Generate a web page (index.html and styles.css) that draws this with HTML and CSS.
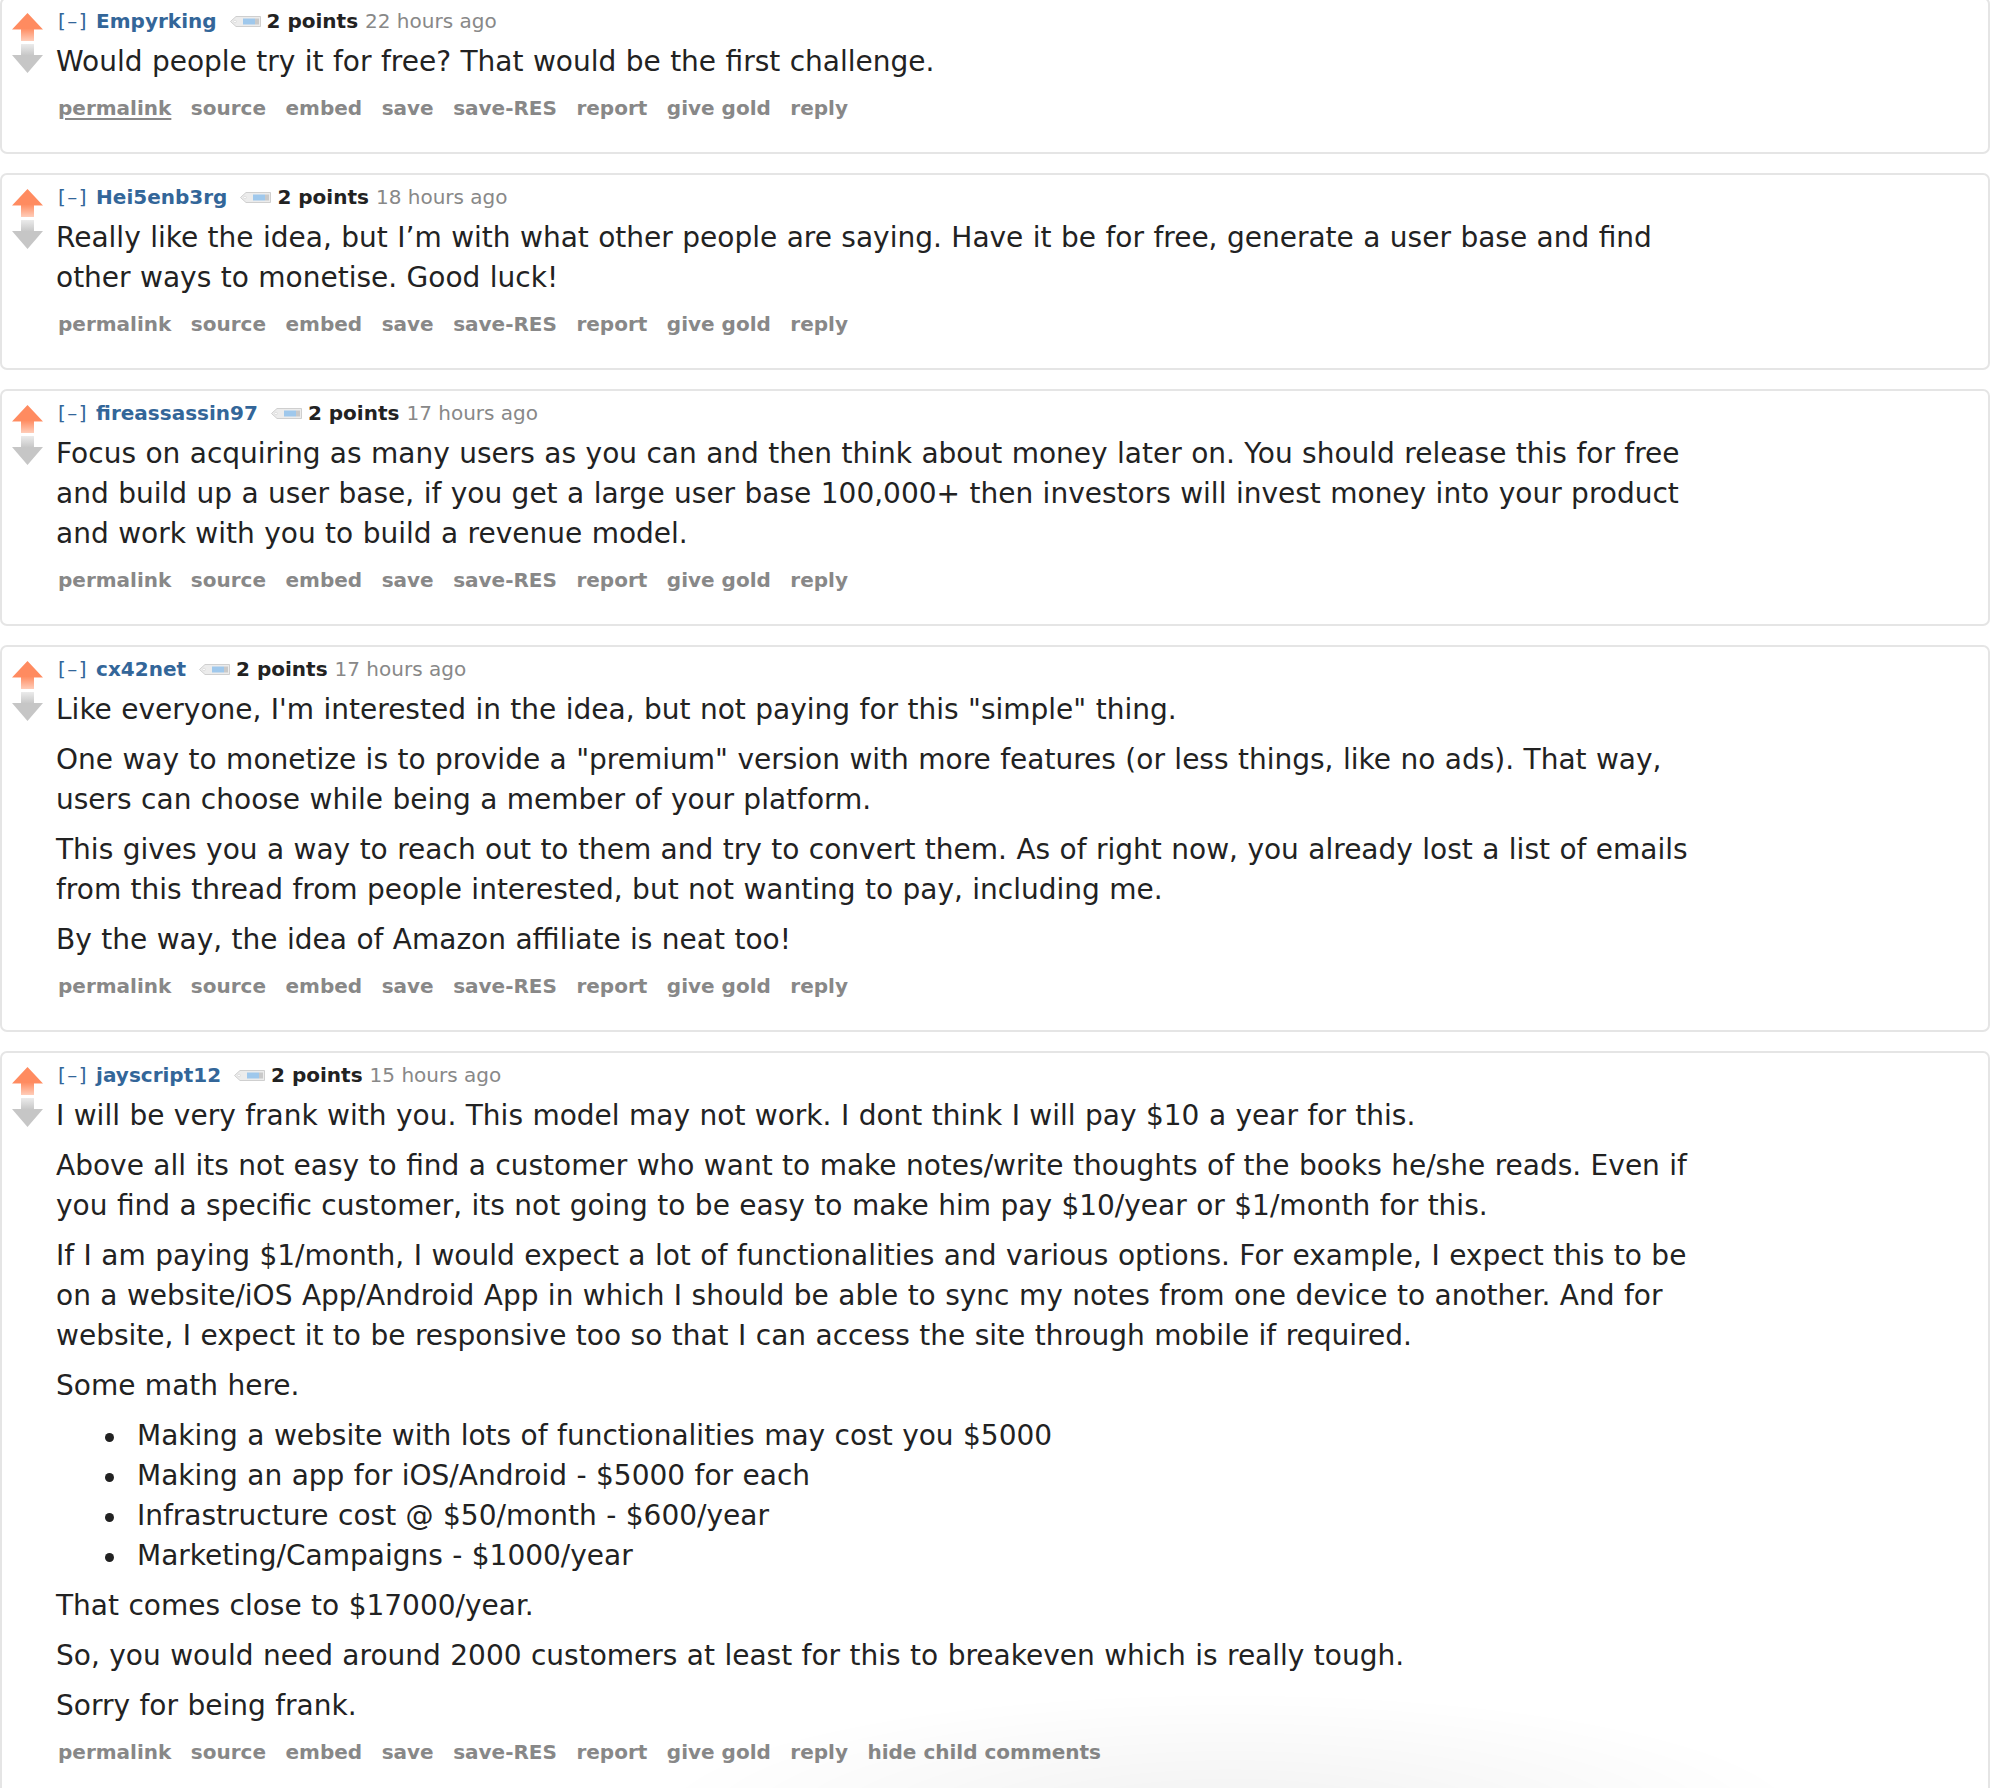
FILE: index.html
```html
<!DOCTYPE html>
<html lang="en">
<head>
<meta charset="utf-8">
<title>Comments</title>
<link rel="stylesheet" href="styles.css">
</head>
<body>
<div class="comments">

  <div class="comment">
    <div class="midcol">
      <svg class="arrow" width="31" height="28" viewBox="0 0 31 28"><defs><linearGradient id="ug1" x1="0" y1="0" x2="0" y2="1"><stop offset="0" stop-color="#ff8b60"/><stop offset="0.55" stop-color="#ff8b60"/><stop offset="1" stop-color="#ffcdb9"/></linearGradient></defs><polygon points="15.5,0 31,16.5 22,16.5 22,28 9,28 9,16.5 0,16.5" fill="url(#ug1)"/></svg>
      <svg class="arrow" width="31" height="29" viewBox="0 0 31 29"><defs><linearGradient id="dg1" x1="0" y1="0" x2="0" y2="1"><stop offset="0" stop-color="#ebebeb"/><stop offset="0.4" stop-color="#c6c6c6"/><stop offset="1" stop-color="#c6c6c6"/></linearGradient></defs><polygon points="9,0 22,0 22,11 31,11 15.5,29 0,11 9,11" fill="url(#dg1)"/></svg>
    </div>
    <div class="entry">
      <div class="tagline">
        <span class="expand">[–]</span>
        <span class="author">Empyrking</span>
        <svg class="tag" width="31" height="11" viewBox="0 0 31 11"><polygon points="0.5,5.5 6,0.5 30.5,0.5 30.5,10.5 6,10.5" fill="#ececec" stroke="#cfcfcf"/><circle cx="5" cy="5.5" r="1.3" fill="#fff" stroke="#cfcfcf" stroke-width="0.6"/><rect x="13" y="2.5" width="12" height="6" fill="#9fc8ec"/><rect x="25" y="2.5" width="4" height="6" fill="#c9c9c9"/></svg>
        <span class="score">2 points</span>
        <span class="time">22 hours ago</span>
      </div>
      <div class="md">
        <p>Would people try it for free? That would be the first challenge.</p>
      </div>
      <ul class="buttons">
        <li class="hover">permalink</li><li>source</li><li>embed</li><li>save</li><li>save-RES</li><li>report</li><li>give gold</li><li>reply</li>
      </ul>
    </div>
  </div>

  <div class="comment">
    <div class="midcol">
      <svg class="arrow" width="31" height="28" viewBox="0 0 31 28"><defs><linearGradient id="ug2" x1="0" y1="0" x2="0" y2="1"><stop offset="0" stop-color="#ff8b60"/><stop offset="0.55" stop-color="#ff8b60"/><stop offset="1" stop-color="#ffcdb9"/></linearGradient></defs><polygon points="15.5,0 31,16.5 22,16.5 22,28 9,28 9,16.5 0,16.5" fill="url(#ug2)"/></svg>
      <svg class="arrow" width="31" height="29" viewBox="0 0 31 29"><defs><linearGradient id="dg2" x1="0" y1="0" x2="0" y2="1"><stop offset="0" stop-color="#ebebeb"/><stop offset="0.4" stop-color="#c6c6c6"/><stop offset="1" stop-color="#c6c6c6"/></linearGradient></defs><polygon points="9,0 22,0 22,11 31,11 15.5,29 0,11 9,11" fill="url(#dg2)"/></svg>
    </div>
    <div class="entry">
      <div class="tagline">
        <span class="expand">[–]</span>
        <span class="author">Hei5enb3rg</span>
        <svg class="tag" width="31" height="11" viewBox="0 0 31 11"><polygon points="0.5,5.5 6,0.5 30.5,0.5 30.5,10.5 6,10.5" fill="#ececec" stroke="#cfcfcf"/><circle cx="5" cy="5.5" r="1.3" fill="#fff" stroke="#cfcfcf" stroke-width="0.6"/><rect x="13" y="2.5" width="12" height="6" fill="#9fc8ec"/><rect x="25" y="2.5" width="4" height="6" fill="#c9c9c9"/></svg>
        <span class="score">2 points</span>
        <span class="time">18 hours ago</span>
      </div>
      <div class="md">
        <p>Really like the idea, but I’m with what other people are saying. Have it be for free, generate a user base and find other ways to monetise. Good luck!</p>
      </div>
      <ul class="buttons">
        <li>permalink</li><li>source</li><li>embed</li><li>save</li><li>save-RES</li><li>report</li><li>give gold</li><li>reply</li>
      </ul>
    </div>
  </div>

  <div class="comment">
    <div class="midcol">
      <svg class="arrow" width="31" height="28" viewBox="0 0 31 28"><defs><linearGradient id="ug3" x1="0" y1="0" x2="0" y2="1"><stop offset="0" stop-color="#ff8b60"/><stop offset="0.55" stop-color="#ff8b60"/><stop offset="1" stop-color="#ffcdb9"/></linearGradient></defs><polygon points="15.5,0 31,16.5 22,16.5 22,28 9,28 9,16.5 0,16.5" fill="url(#ug3)"/></svg>
      <svg class="arrow" width="31" height="29" viewBox="0 0 31 29"><defs><linearGradient id="dg3" x1="0" y1="0" x2="0" y2="1"><stop offset="0" stop-color="#ebebeb"/><stop offset="0.4" stop-color="#c6c6c6"/><stop offset="1" stop-color="#c6c6c6"/></linearGradient></defs><polygon points="9,0 22,0 22,11 31,11 15.5,29 0,11 9,11" fill="url(#dg3)"/></svg>
    </div>
    <div class="entry">
      <div class="tagline">
        <span class="expand">[–]</span>
        <span class="author">fireassassin97</span>
        <svg class="tag" width="31" height="11" viewBox="0 0 31 11"><polygon points="0.5,5.5 6,0.5 30.5,0.5 30.5,10.5 6,10.5" fill="#ececec" stroke="#cfcfcf"/><circle cx="5" cy="5.5" r="1.3" fill="#fff" stroke="#cfcfcf" stroke-width="0.6"/><rect x="13" y="2.5" width="12" height="6" fill="#9fc8ec"/><rect x="25" y="2.5" width="4" height="6" fill="#c9c9c9"/></svg>
        <span class="score">2 points</span>
        <span class="time">17 hours ago</span>
      </div>
      <div class="md">
        <p>Focus on acquiring as many users as you can and then think about money later on. You should release this for free and build up a user base, if you get a large user base 100,000+ then investors will invest money into your product and work with you to build a revenue model.</p>
      </div>
      <ul class="buttons">
        <li>permalink</li><li>source</li><li>embed</li><li>save</li><li>save-RES</li><li>report</li><li>give gold</li><li>reply</li>
      </ul>
    </div>
  </div>

  <div class="comment">
    <div class="midcol">
      <svg class="arrow" width="31" height="28" viewBox="0 0 31 28"><defs><linearGradient id="ug4" x1="0" y1="0" x2="0" y2="1"><stop offset="0" stop-color="#ff8b60"/><stop offset="0.55" stop-color="#ff8b60"/><stop offset="1" stop-color="#ffcdb9"/></linearGradient></defs><polygon points="15.5,0 31,16.5 22,16.5 22,28 9,28 9,16.5 0,16.5" fill="url(#ug4)"/></svg>
      <svg class="arrow" width="31" height="29" viewBox="0 0 31 29"><defs><linearGradient id="dg4" x1="0" y1="0" x2="0" y2="1"><stop offset="0" stop-color="#ebebeb"/><stop offset="0.4" stop-color="#c6c6c6"/><stop offset="1" stop-color="#c6c6c6"/></linearGradient></defs><polygon points="9,0 22,0 22,11 31,11 15.5,29 0,11 9,11" fill="url(#dg4)"/></svg>
    </div>
    <div class="entry">
      <div class="tagline">
        <span class="expand">[–]</span>
        <span class="author">cx42net</span>
        <svg class="tag" width="31" height="11" viewBox="0 0 31 11"><polygon points="0.5,5.5 6,0.5 30.5,0.5 30.5,10.5 6,10.5" fill="#ececec" stroke="#cfcfcf"/><circle cx="5" cy="5.5" r="1.3" fill="#fff" stroke="#cfcfcf" stroke-width="0.6"/><rect x="13" y="2.5" width="12" height="6" fill="#9fc8ec"/><rect x="25" y="2.5" width="4" height="6" fill="#c9c9c9"/></svg>
        <span class="score">2 points</span>
        <span class="time">17 hours ago</span>
      </div>
      <div class="md">
        <p>Like everyone, I'm interested in the idea, but not paying for this "simple" thing.</p>
        <p>One way to monetize is to provide a "premium" version with more features (or less things, like no ads). That way, users can choose while being a member of your platform.</p>
        <p>This gives you a way to reach out to them and try to convert them. As of right now, you already lost a list of emails from this thread from people interested, but not wanting to pay, including me.</p>
        <p>By the way, the idea of Amazon affiliate is neat too!</p>
      </div>
      <ul class="buttons">
        <li>permalink</li><li>source</li><li>embed</li><li>save</li><li>save-RES</li><li>report</li><li>give gold</li><li>reply</li>
      </ul>
    </div>
  </div>

  <div class="comment">
    <div class="midcol">
      <svg class="arrow" width="31" height="28" viewBox="0 0 31 28"><defs><linearGradient id="ug5" x1="0" y1="0" x2="0" y2="1"><stop offset="0" stop-color="#ff8b60"/><stop offset="0.55" stop-color="#ff8b60"/><stop offset="1" stop-color="#ffcdb9"/></linearGradient></defs><polygon points="15.5,0 31,16.5 22,16.5 22,28 9,28 9,16.5 0,16.5" fill="url(#ug5)"/></svg>
      <svg class="arrow" width="31" height="29" viewBox="0 0 31 29"><defs><linearGradient id="dg5" x1="0" y1="0" x2="0" y2="1"><stop offset="0" stop-color="#ebebeb"/><stop offset="0.4" stop-color="#c6c6c6"/><stop offset="1" stop-color="#c6c6c6"/></linearGradient></defs><polygon points="9,0 22,0 22,11 31,11 15.5,29 0,11 9,11" fill="url(#dg5)"/></svg>
    </div>
    <div class="entry">
      <div class="tagline">
        <span class="expand">[–]</span>
        <span class="author">jayscript12</span>
        <svg class="tag" width="31" height="11" viewBox="0 0 31 11"><polygon points="0.5,5.5 6,0.5 30.5,0.5 30.5,10.5 6,10.5" fill="#ececec" stroke="#cfcfcf"/><circle cx="5" cy="5.5" r="1.3" fill="#fff" stroke="#cfcfcf" stroke-width="0.6"/><rect x="13" y="2.5" width="12" height="6" fill="#9fc8ec"/><rect x="25" y="2.5" width="4" height="6" fill="#c9c9c9"/></svg>
        <span class="score">2 points</span>
        <span class="time">15 hours ago</span>
      </div>
      <div class="md">
        <p>I will be very frank with you. This model may not work. I dont think I will pay $10 a year for this.</p>
        <p>Above all its not easy to find a customer who want to make notes/write thoughts of the books he/she reads. Even if you find a specific customer, its not going to be easy to make him pay $10/year or $1/month for this.</p>
        <p>If I am paying $1/month, I would expect a lot of functionalities and various options. For example, I expect this to be on a website/iOS App/Android App in which I should be able to sync my notes from one device to another. And for website, I expect it to be responsive too so that I can access the site through mobile if required.</p>
        <p>Some math here.</p>
        <ul>
          <li>Making a website with lots of functionalities may cost you $5000</li>
          <li>Making an app for iOS/Android - $5000 for each</li>
          <li>Infrastructure cost @ $50/month - $600/year</li>
          <li>Marketing/Campaigns - $1000/year</li>
        </ul>
        <p>That comes close to $17000/year.</p>
        <p>So, you would need around 2000 customers at least for this to breakeven which is really tough.</p>
        <p>Sorry for being frank.</p>
      </div>
      <ul class="buttons">
        <li>permalink</li><li>source</li><li>embed</li><li>save</li><li>save-RES</li><li>report</li><li>give gold</li><li>reply</li><li>hide child comments</li>
      </ul>
    </div>
  </div>

</div>
</body>
</html>
```

FILE: styles.css
```css
* { box-sizing: border-box; }

html, body {
  margin: 0;
  padding: 0;
  background: #fff;
}

body {
  font-family: "DejaVu Sans", Verdana, sans-serif;
  color: #222;
  height: 1788px;
  overflow: hidden;
}

body::after {
  content: "";
  position: fixed;
  left: 640px;
  top: 1690px;
  width: 1180px;
  height: 260px;
  background: radial-gradient(ellipse at center, rgba(0, 0, 0, 0.055) 0%, rgba(0, 0, 0, 0.025) 40%, rgba(0, 0, 0, 0) 70%);
  pointer-events: none;
}

.comments {
  margin-top: -3px;
}

.comment {
  display: flex;
  align-items: flex-start;
  background: #fff;
  border: 2px solid #e5e5e5;
  border-radius: 7px;
  padding: 10px 0 32px 10px;
  margin-bottom: 19px;
}

.midcol {
  flex: none;
  width: 31px;
  margin-right: 13px;
  padding-top: 4px;
  display: flex;
  flex-direction: column;
  gap: 3px;
}

.arrow {
  display: block;
}

.entry {
  flex: 1;
  min-width: 0;
}

.tagline {
  display: flex;
  align-items: center;
  height: 24px;
  font-size: 20px;
  line-height: 24px;
  white-space: nowrap;
}

.expand {
  color: #369;
  letter-spacing: 1.5px;
  margin-left: 2px;
  margin-right: 8px;
}

.author {
  color: #369;
  font-weight: bold;
  margin-right: 13px;
}

.tag {
  display: block;
  margin-right: 6px;
  margin-top: 1px;
}

.score {
  color: #222;
  font-weight: bold;
  margin-right: 7px;
}

.time {
  color: #888;
}

.md {
  display: flow-root;
  margin-top: 9px;
  max-width: 1664px;
  font-size: 28px;
  line-height: 40px;
  word-spacing: 0.55px;
  color: #222;
}

.md p {
  margin: 0 0 10px;
}

.md ul {
  margin: 0 0 10px;
  padding-left: 81px;
  list-style: none;
}

.md li::before {
  content: "";
  display: inline-block;
  width: 9px;
  height: 9px;
  border-radius: 50%;
  background: #222;
  margin-left: -32px;
  margin-right: 23px;
  vertical-align: middle;
}

.buttons {
  display: flex;
  gap: 19.5px;
  margin: 4px 0 0;
  padding: 0 0 0 2px;
  list-style: none;
  font-size: 20px;
  line-height: 24px;
  font-weight: bold;
  color: #888;
  white-space: nowrap;
}

.buttons .hover {
  text-decoration: underline;
  text-decoration-thickness: 2px;
  text-underline-offset: 3px;
}
```
